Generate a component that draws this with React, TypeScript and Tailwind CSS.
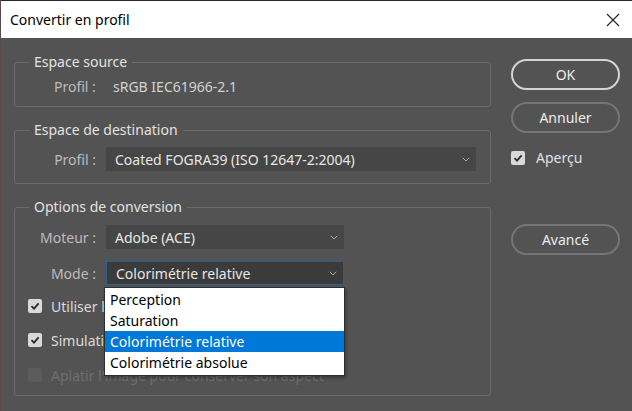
import React from 'react';

const font = { fontFamily: '"Noto Sans", "Open Sans", sans-serif' };

const Chevron = () => (
  <svg width="8" height="5" viewBox="0 0 8 5" className="shrink-0">
    <polyline points="0.8,0.8 4,4 7.2,0.8" fill="none" stroke="#aaaaaa" strokeWidth="1" />
  </svg>
);

interface SelectProps {
  value: string;
  width: string;
  focused?: boolean;
}

const Select: React.FC<SelectProps> = ({ value, width, focused }) => (
  <div
    className={`flex items-center justify-between h-[24px] pl-[9px] pr-[6px] text-[14px] text-[#e6e6e6] ${width} ${
      focused ? 'bg-[#3b3b3b] border border-[#2d5d92]' : 'bg-[#464646]'
    }`}
  >
    <span>{value}</span>
    <Chevron />
  </div>
);

const Check = ({ disabled }: { disabled?: boolean }) => (
  <div
    className={`w-[14px] h-[14px] rounded-[2px] flex items-center justify-center ${
      disabled ? 'bg-[#5c5c5c]' : 'bg-[#d9d9d9]'
    }`}
  >
    {!disabled && (
      <svg width="10" height="10" viewBox="0 0 10 10">
        <polyline points="1.5,5.2 4,7.6 8.6,2.4" fill="none" stroke="#2b2b2b" strokeWidth="1.8" />
      </svg>
    )}
  </div>
);

const Group: React.FC<{ title: string; className: string; children: React.ReactNode }> = ({
  title,
  className,
  children,
}) => (
  <fieldset className={`border border-[#6b6b6b] rounded-[3px] ${className}`}>
    <legend className="ml-[14px] px-[5px] text-[14px] leading-[20px] text-[#e2e2e2]">{title}</legend>
    {children}
  </fieldset>
);

const Button: React.FC<{ label: string; primary?: boolean }> = ({ label, primary }) => (
  <div
    className={`w-[109px] h-[31px] rounded-full flex items-center justify-center text-[14px] text-[#ececec] border-2 ${
      primary ? 'border-[#d4d4d4]' : 'border-[#757575]'
    }`}
  >
    {label}
  </div>
);

export default function App() {
  return (
    <div
      className="w-[632px] h-[411px] bg-[#535353] border-l border-[#5e4a4a] flex flex-col overflow-hidden"
      style={font}
    >
      {/* Title bar */}
      <div className="h-[38px] shrink-0 bg-white border-t border-[#2a2a2a] flex items-center justify-between pl-[9px] pr-[12px]">
        <span className="text-[14px] text-black">Convertir en profil</span>
        <svg width="14" height="14" viewBox="0 0 14 14">
          <path d="M1 1 L13 13 M13 1 L1 13" stroke="#222" strokeWidth="1.1" />
        </svg>
      </div>

      <div className="flex flex-1">
        {/* Left column */}
        <div className="relative flex flex-col gap-[13px] pl-[13px] pt-[14px] w-[490px]">
          <Group title="Espace source" className="h-[55px]">
            <div className="flex items-center pl-[39px] pt-[4px] text-[14px]">
              <span className="text-[#bcbcbc] w-[59px]">Profil :</span>
              <span className="text-[#d2d2d2]">sRGB IEC61966-2.1</span>
            </div>
          </Group>

          <Group title="Espace de destination" className="h-[64px]">
            <div className="flex items-center pt-[7px] text-[14px]">
              <span className="text-[#bcbcbc] w-[84px] text-right pr-[3px]">Profil :</span>
              <div className="ml-[7px]">
                <Select value="Coated FOGRA39 (ISO 12647-2:2004)" width="w-[370px]" />
              </div>
            </div>
          </Group>

          <Group title="Options de conversion" className="h-[199px]">
            <div className="flex flex-col pt-[8px] text-[14px]">
              <div className="flex items-center">
                <span className="text-[#bcbcbc] w-[84px] text-right pr-[3px]">Moteur :</span>
                <div className="ml-[7px]">
                  <Select value="Adobe (ACE)" width="w-[238px]" />
                </div>
              </div>
              <div className="flex items-center mt-[12px]">
                <span className="text-[#bcbcbc] w-[84px] text-right pr-[3px]">Mode :</span>
                <div className="ml-[7px]">
                  <Select value="Colorimétrie relative" width="w-[238px]" focused />
                </div>
              </div>
              <div className="flex flex-col gap-[20px] pl-[13px] mt-[14px]">
                <div className="flex items-center gap-[9px] h-[14px]">
                  <Check />
                  <span className="text-[#dadada]">Utiliser le compensation du point noir</span>
                </div>
                <div className="flex items-center gap-[9px] h-[14px]">
                  <Check />
                  <span className="text-[#dadada]">Simulation (en cas de rendu non absolu)</span>
                </div>
                <div className="flex items-center gap-[9px] h-[14px] mt-[1px]">
                  <Check disabled />
                  <span className="text-[#6e6e6e]">Aplatir l'image pour conserver son aspect</span>
                </div>
              </div>
            </div>
          </Group>

          {/* Open dropdown list */}
          <div className="absolute left-[103px] top-[249px] w-[241px] bg-white border border-[#2e2e2e] shadow-[1px_2px_3px_rgba(0,0,0,0.35)] py-[1px] text-[14px] text-black">
            <div className="h-[21px] leading-[21px] pl-[5px]">Perception</div>
            <div className="h-[21px] leading-[21px] pl-[5px]">Saturation</div>
            <div className="h-[21px] leading-[21px] pl-[5px] bg-[#0078d7] text-white">Colorimétrie relative</div>
            <div className="h-[22px] leading-[22px] pl-[5px]">Colorimétrie absolue</div>
          </div>
        </div>

        {/* Right column */}
        <div className="flex flex-col pl-[20px] pt-[21px]">
          <Button label="OK" primary />
          <div className="mt-[12px]">
            <Button label="Annuler" />
          </div>
          <div className="flex items-center gap-[11px] mt-[14px] text-[14px] text-[#e0e0e0]">
            <Check />
            <span>Aperçu</span>
          </div>
          <div className="mt-[56px]">
            <Button label="Avancé" />
          </div>
        </div>
      </div>
    </div>
  );
}
